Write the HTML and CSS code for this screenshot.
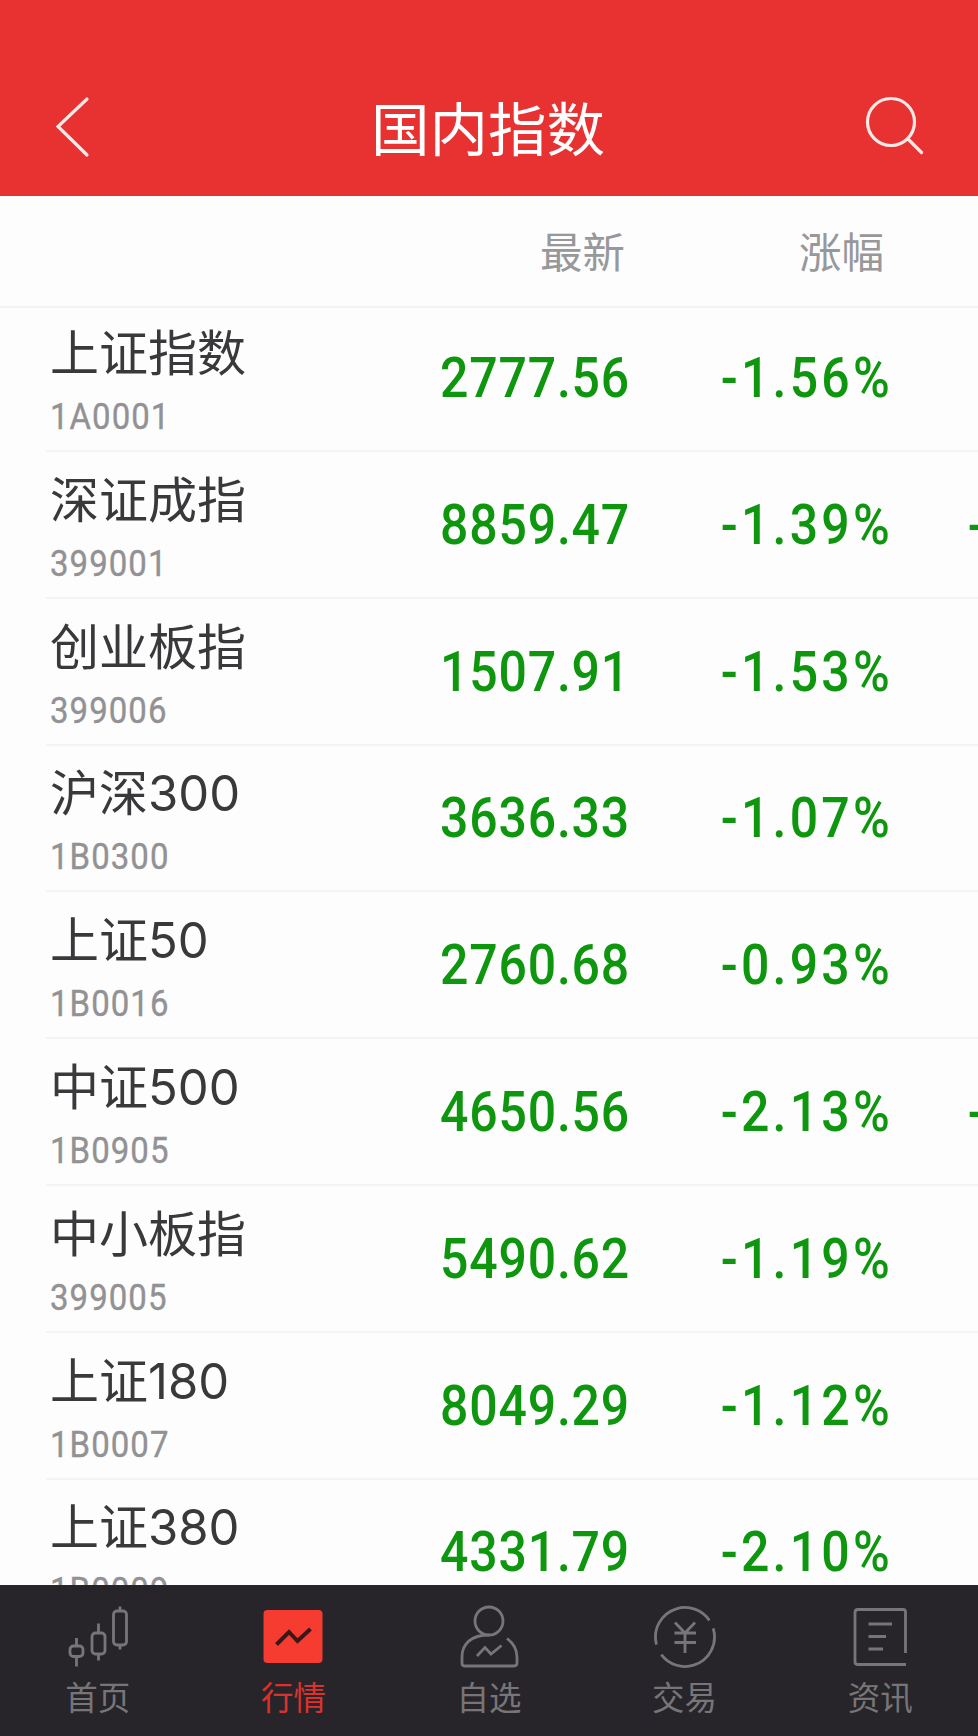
FILE: index.html
```
<!DOCTYPE html>
<html lang="zh-CN">
<head>
  <meta charset="UTF-8" />
  <meta name="viewport" content="width=device-width, initial-scale=1.0"/>
  <title>国内指数</title>
  <link rel="stylesheet" href="styles.css">
</head>
<body>
  <div class="app">
    <header class="navbar">
      <svg class="nav-icon" viewBox="0 0 64 64"><path d="M35 4 L6 31.5 L35 60" /></svg>
      <h1>国内指数</h1>
      <svg class="nav-icon" viewBox="0 0 64 64"><circle cx="31" cy="27" r="23.5" /><path d="M48 44 L61.5 57.5" /></svg>
    </header>

    <div class="table-head">
      <span class="col-price">最新</span>
      <span class="col-change">涨幅</span>
    </div>

    <main class="list">
      <div class="row">
        <div class="stock"><div class="name">上证指数</div><div class="code">1A0001</div></div>
        <div class="price">2777.56</div><div class="change">-1.56%</div><div class="more"></div>
      </div>
      <div class="row">
        <div class="stock"><div class="name">深证成指</div><div class="code">399001</div></div>
        <div class="price">8859.47</div><div class="change">-1.39%</div><div class="more">-</div>
      </div>
      <div class="row">
        <div class="stock"><div class="name">创业板指</div><div class="code">399006</div></div>
        <div class="price">1507.91</div><div class="change">-1.53%</div><div class="more"></div>
      </div>
      <div class="row">
        <div class="stock"><div class="name">沪深300</div><div class="code">1B0300</div></div>
        <div class="price">3636.33</div><div class="change">-1.07%</div><div class="more"></div>
      </div>
      <div class="row">
        <div class="stock"><div class="name">上证50</div><div class="code">1B0016</div></div>
        <div class="price">2760.68</div><div class="change">-0.93%</div><div class="more"></div>
      </div>
      <div class="row">
        <div class="stock"><div class="name">中证500</div><div class="code">1B0905</div></div>
        <div class="price">4650.56</div><div class="change">-2.13%</div><div class="more">-</div>
      </div>
      <div class="row">
        <div class="stock"><div class="name">中小板指</div><div class="code">399005</div></div>
        <div class="price">5490.62</div><div class="change">-1.19%</div><div class="more"></div>
      </div>
      <div class="row">
        <div class="stock"><div class="name">上证180</div><div class="code">1B0007</div></div>
        <div class="price">8049.29</div><div class="change">-1.12%</div><div class="more"></div>
      </div>
      <div class="row">
        <div class="stock"><div class="name">上证380</div><div class="code">1B0009</div></div>
        <div class="price">4331.79</div><div class="change">-2.10%</div><div class="more"></div>
      </div>
    </main>

    <nav class="tabbar">
      <div class="tab">
        <svg viewBox="0 0 64 64">
          <rect x="4" y="41" width="13" height="10.5" rx="3.5" /><path d="M10.5 33v8M10.5 51.5v10" />
          <rect x="26" y="28" width="13" height="21" rx="3.5" /><path d="M32.5 18.5v10M32.5 49v6.5" />
          <rect x="47.5" y="6" width="13" height="34" rx="3.5" /><path d="M54 1.5v5M54 40v4.5" />
        </svg>
        <span>首页</span>
      </div>
      <div class="tab active">
        <svg viewBox="0 0 64 64">
          <rect class="fill" x="2.5" y="5" width="59" height="53" rx="4" />
          <path class="trend" d="M15.5 39.5 L28 27 L36.5 36 L49.5 24" />
        </svg>
        <span>行情</span>
      </div>
      <div class="tab">
        <svg viewBox="0 0 64 64">
          <circle cx="32" cy="16" r="14" />
          <path d="M32 30 C14 30 5 39 5 52 V58 Q5 61 7.5 61 H57 Q60 61 60 58 V52 C60 44 56 38 50 33.5" />
          <path d="M20 51 L28 42.500 L34 49 L44.500 40.500" />
        </svg>
        <span>自选</span>
      </div>
      <div class="tab">
        <svg viewBox="0 0 64 64">
          <circle cx="32" cy="32" r="29.5" stroke-dasharray="82.4 11.3 82.4 9.3" transform="rotate(-17 32 32)" />
          <path d="M22 17.5 L32 28 L42 17.5 M32 28 V48 M21.5 28 H43 M21.5 37.5 H43" />
        </svg>
        <span>交易</span>
      </div>
      <div class="tab">
        <svg viewBox="0 0 64 64">
          <path d="M57.5 48 V7 Q57.5 4.5 55 4.5 H10 Q7 4.5 7 7.5 V57 Q7 59.5 10 59.5 H58" />
          <path d="M20.5 19 H44 M20.5 31.5 H38 M20.5 44 H35" />
        </svg>
        <span>资讯</span>
      </div>
    </nav>
  </div>
</body>
</html>
```
FILE: styles.css
```
* {
  box-sizing: border-box;
}
body {
  margin: 0;
  background: #fdfdfd;
  font-family: Inter, "Noto Sans CJK SC", sans-serif;
}
.app {
  display: flex;
  flex-direction: column;
  width: 978px;
  height: 1736px;
  overflow: hidden;
}
.navbar {
  display: flex;
  justify-content: space-between;
  flex: none;
  height: 196px;
  padding: 95px 54px 0 52px;
  background: #e83131;
  color: #fff;
}
.navbar h1 {
  margin: 0;
  font-size: 58.5px;
  font-weight: 400;
  line-height: 70px;
}
.nav-icon {
  width: 64px;
  height: 64px;
  fill: none;
  stroke: #ffe9e6;
  stroke-width: 3.2;
  stroke-linecap: round;
}
.table-head {
  display: grid;
  grid-template-columns: 625px 259px;
  flex: none;
  height: 112px;
  border-bottom: 2px solid #f6f1f6;
  color: #98979a;
  font-size: 42.5px;
  line-height: 113px;
  text-align: right;
}
.list {
  flex: 1;
  min-height: 0;
  overflow: hidden;
}
.row {
  display: grid;
  grid-template-columns: 340px 244px 263px 85px;
  height: 146.8px;
  margin-left: 46px;
  border-bottom: 2px solid #f4f4f5;
}
.row:first-child {
  height: 144px;
}
.stock {
  display: flex;
  flex-direction: column;
  justify-content: flex-end;
  padding: 0 0 11px 4px;
}
.name {
  color: #39383b;
  font-size: 49px;
  line-height: 60px;
  white-space: nowrap;
}
.code {
  margin-top: 11px;
  color: #929194;
  font-family: Roboto, sans-serif;
  font-size: 37px;
  letter-spacing: 1.2px;
  line-height: 44px;
  -webkit-text-stroke: .4px #929194;
  transform: scaleX(.89);
  transform-origin: left;
}
.price, .change, .more {
  align-self: end;
  padding-bottom: 39px;
  color: #0f960f;
  font-family: Roboto, sans-serif;
  font-size: 55.5px;
  font-weight: 500;
  letter-spacing: .9px;
  line-height: 64px;
  text-align: right;
  transform: scaleX(.9);
  transform-origin: right;
}
.change {
  letter-spacing: 3.6px;
}
.more {
  padding-left: 83px;
  text-align: left;
  transform-origin: left;
}
.tabbar {
  display: flex;
  flex: none;
  height: 151px;
  background: #272529;
}
.tab {
  display: flex;
  flex: 1;
  flex-direction: column;
  align-items: center;
  padding-top: 20px;
  color: #777578;
  font-size: 32.5px;
  line-height: 40px;
}
.tab svg {
  width: 64px;
  height: 64px;
  margin-bottom: 10px;
  fill: none;
  stroke: #777578;
  stroke-width: 2.8;
}
.tab.active {
  color: #dc322e;
}
.tab .fill {
  fill: #f63b30;
  stroke: none;
}
.tab .trend {
  stroke: #3c1718;
  stroke-width: 4;
}
```
